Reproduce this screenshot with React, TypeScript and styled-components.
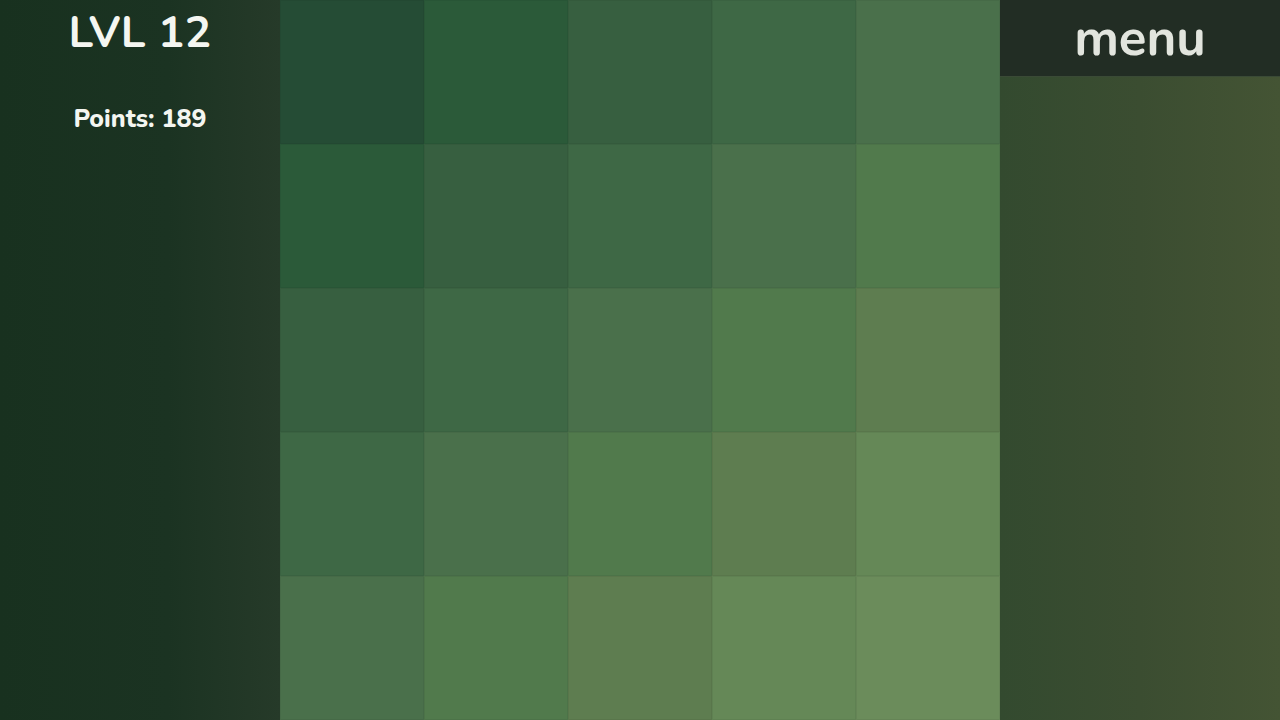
import React from "react";
import styled, { createGlobalStyle } from "styled-components";

const Global = createGlobalStyle`
  html, body { margin: 0; padding: 0; width: 1280px; height: 720px; overflow: hidden; background: #1b3322; }
  #root { width: 1280px; height: 720px; }
  * { box-sizing: border-box; }
`;

const Page = styled.div`
  display: flex;
  width: 1280px;
  height: 720px;
  font-family: "Nunito", "Open Sans", "Noto Sans", sans-serif;
`;

const LeftPanel = styled.aside`
  width: 280px;
  height: 100%;
  display: flex;
  flex-direction: column;
  align-items: center;
  background: linear-gradient(90deg, #18311f 0%, #1b3322 60%, #263a29 100%);
  color: #f4f6f1;
`;

const Level = styled.h1`
  margin: 4px 0 0;
  font-size: 44px;
  font-weight: 700;
  line-height: 58px;
  letter-spacing: 0.3px;
`;

const Points = styled.div`
  margin-top: 42px;
  font-size: 25px;
  font-weight: 800;
  line-height: 30px;
`;

const Board = styled.div`
  width: 720px;
  height: 720px;
  display: grid;
  grid-template-columns: repeat(5, 144px);
  grid-template-rows: repeat(5, 144px);
`;

const Cell = styled.div<{ $bg: string }>`
  background: ${(p) => p.$bg};
  box-shadow: inset 0 0 0 1px rgba(0, 0, 0, 0.05);
`;

const RightPanel = styled.aside`
  width: 280px;
  height: 100%;
  display: flex;
  flex-direction: column;
  background: linear-gradient(90deg, #334a2f 0%, #3b4d31 50%, #445434 100%);
`;

const MenuButton = styled.button`
  width: 280px;
  height: 77px;
  border: none;
  border-bottom: 1px solid #3a4a36;
  background: #222d24;
  color: #e2e5de;
  font-family: inherit;
  font-size: 51px;
  font-weight: 700;
  line-height: 60px;
  padding: 0;
  cursor: pointer;
  display: flex;
  align-items: center;
  justify-content: center;
`;

const palette = [
  "#254c35",
  "#2b5a39",
  "#375f40",
  "#3e6845",
  "#4a704b",
  "#517a4c",
  "#5e7d50",
  "#658857",
  "#6b8c5b",
];

export default function App() {
  const cells = [];
  for (let r = 0; r < 5; r++) {
    for (let c = 0; c < 5; c++) {
      cells.push(<Cell key={`${r}-${c}`} $bg={palette[r + c]} />);
    }
  }
  return (
    <>
      <Global />
      <Page>
        <LeftPanel>
          <Level>LVL 12</Level>
          <Points>Points: 189</Points>
        </LeftPanel>
        <Board>{cells}</Board>
        <RightPanel>
          <MenuButton>menu</MenuButton>
        </RightPanel>
      </Page>
    </>
  );
}
